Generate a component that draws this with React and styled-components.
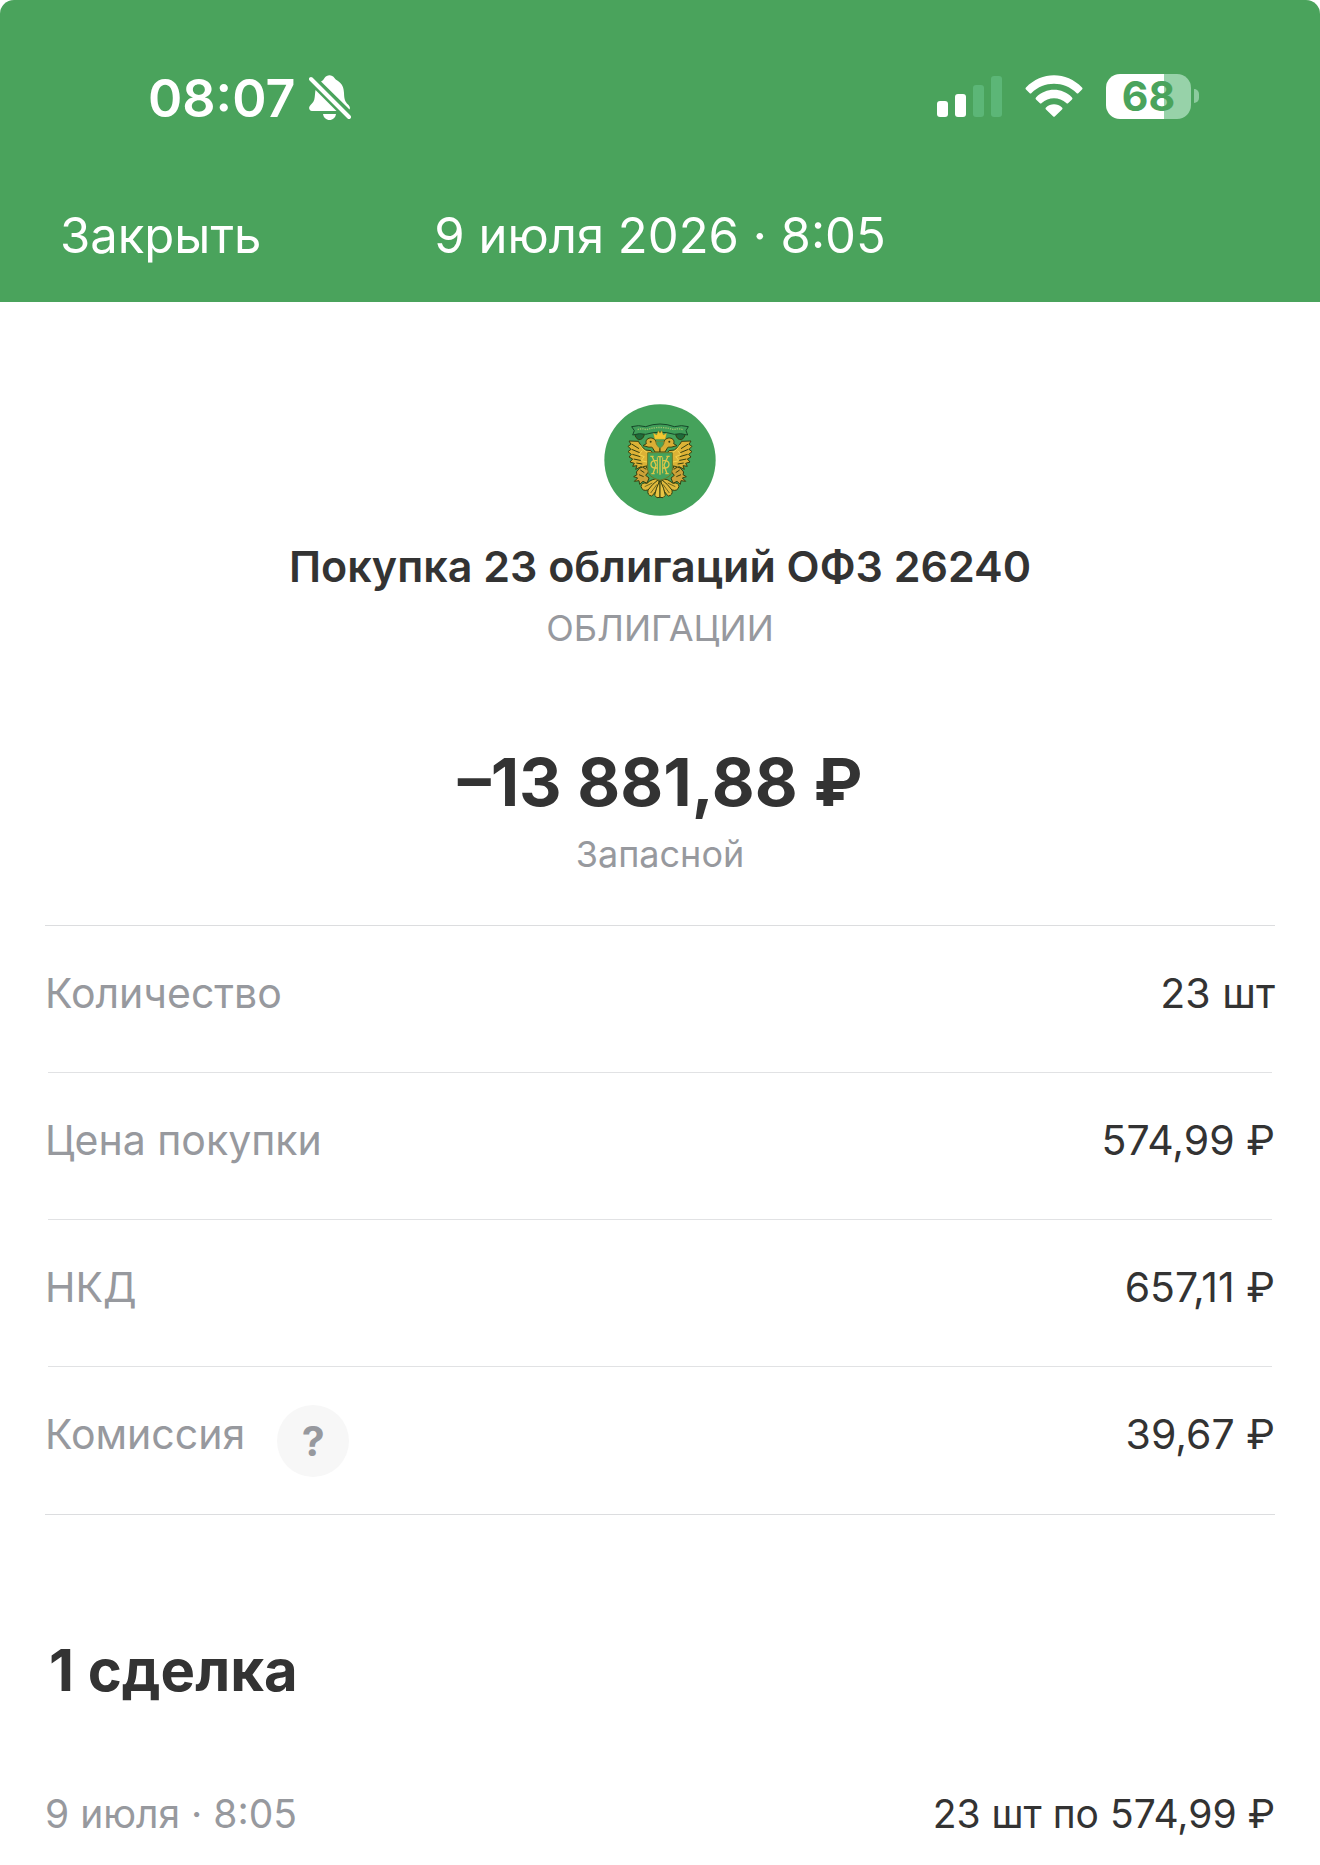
import React from "react";
import styled, { createGlobalStyle } from "styled-components";

const GlobalStyle = createGlobalStyle`
  * {
    box-sizing: border-box;
  }
  body {
    margin: 0;
    background-color: #fff;
    color: #333;
    font-family: "Inter", "Liberation Sans", sans-serif;
  }
  h1, h2, p, dl, dt, dd {
    margin: 0;
  }
`;

const Header = styled.header`
  padding: 64px 0 36px 0;
  border-radius: 14px 14px 0 0;
  background-color: #4aa35c;
  color: #fff;
`;

const StatusBar = styled.div`
  display: flex;
  justify-content: space-between;
  align-items: center;
  height: 68px;
  padding: 0 121px 0 148px;
`;

const ClockGroup = styled.div`
  display: flex;
  align-items: center;
  gap: 14px;
`;

const IconGroup = styled.div`
  display: flex;
  align-items: center;
  gap: 23px;
  padding-bottom: 4px;
`;

const Clock = styled.time`
  font-size: 52px;
  font-weight: 600;
`;

const Signal = styled.div`
  display: flex;
  align-items: flex-end;
  gap: 7px;
  height: 41px;
`;

const Bar = styled.span`
  width: 11px;
  height: ${props => props.size};
  border-radius: 3px;
  background-color: ${props => (props.$on ? "#fff" : "#5cb677")};
`;

const BatteryBox = styled.div`
  display: flex;
  align-items: center;
  gap: 3px;
`;

const BatteryBody = styled.div`
  width: 85px;
  height: 45px;
  border-radius: 14px;
  background: linear-gradient(to right, #fff 68%, #97d2a9 68%);
  color: #4aa35c;
  font-size: 41px;
  font-weight: 700;
  line-height: 45px;
  text-align: center;
`;

const BatteryTip = styled.span`
  width: 5px;
  height: 14px;
  border-radius: 0 7px 7px 0;
  background-color: #8ccb9e;
`;

const NavBar = styled.nav`
  display: grid;
  grid-template-columns: 1fr auto 1fr;
  margin-top: 74px;
  padding: 0 60px;
  font-size: 49px;
  line-height: 60px;
`;

const CloseBtn = styled.button`
  justify-self: start;
  padding: 0;
  border: 0;
  background: none;
  color: inherit;
  font: inherit;
  cursor: pointer;
`;

const Summary = styled.section`
  display: flex;
  flex-direction: column;
  align-items: center;
  padding: 102px 45px 47px;
  text-align: center;
`;

const Title = styled.h1`
  margin-top: 22px;
  font-size: 43px;
  font-weight: 600;
  line-height: 56px;
`;

const Caption = styled.p`
  margin-top: 10px;
  color: #97999e;
  font-size: 36px;
  line-height: 48px;
`;

const Amount = styled.p`
  margin-top: 92px;
  font-size: 66px;
  font-weight: 700;
  line-height: 76px;
`;

const Details = styled.dl`
  margin: 0 45px;
  border-top: 1px solid #dcdddf;
  border-bottom: 1px solid #dcdddf;
`;

const Row = styled.div`
  display: flex;
  justify-content: space-between;
  min-height: 147px;
  padding: 38px 0 37px;
  font-size: 41px;
  line-height: 58px;
  &:not(:last-child) {
    background: linear-gradient(#e1e2e4, #e1e2e4) center bottom / calc(100% - 6px) 1px no-repeat;
  }
`;

const Label = styled.dt`
  display: flex;
  gap: 32px;
  color: #97999e;
`;

const HintBtn = styled.button`
  width: 72px;
  height: 72px;
  padding: 0;
  border: 0;
  border-radius: 50%;
  background-color: #f7f7f7;
  color: #97999e;
  font: inherit;
  font-weight: 700;
  cursor: pointer;
`;

const Deals = styled.section`
  padding: 119px 45px 22px;
`;

const DealsTitle = styled.h2`
  padding: 0 4px;
  font-size: 58px;
  font-weight: 700;
  line-height: 72px;
`;

const Deal = styled.div`
  display: flex;
  justify-content: space-between;
  margin-top: 79px;
  font-size: 39px;
  line-height: 58px;
`;

const DealDate = styled.time`
  color: #97999e;
`;

const BellOff = () => (
  <svg width="42" height="46" viewBox="0 0 42 46" fill="#fff" aria-hidden="true">
    <path d="M12 6.500C14 5.500 14.500 4.500 15.500 3C18 -0.600 23 -0.600 25.500 3C26.500 4.500 27.500 5 29 6C33.500 9 34.800 13 35 18C35.200 24 36 26.500 39 29.500C40.500 31 41.500 32.500 40.500 34.500Z" />
    <path d="M6.500 15L27.500 36H3C0.500 36 -0.500 33.500 0.500 31.500C1.500 29.500 4.500 28 5.300 24.500C6 21.500 6 18 6.500 15Z" />
    <path d="M14 39H27C26.500 42.500 23.800 45 20.500 45C17.200 45 14.500 42.500 14 39Z" />
    <path d="M2 4L40 42" stroke="#fff" strokeWidth="4" strokeLinecap="round" />
  </svg>
);

const Wifi = () => (
  <svg width="58" height="42" viewBox="0 0 58 42" fill="#fff" aria-hidden="true">
    <path d="M1 12.500C16.500 -3.800 41.500 -3.800 57 12.500Q58 13.500 57 14.500L53.500 18Q52.500 19 51.500 18C39 5.800 19 5.800 6.500 18Q5.500 19 4.500 18L1 14.500Q0 13.500 1 12.500Z" />
    <path d="M11 22.500C21 12.300 37 12.300 47 22.500Q48 23.500 47 24.500L43.300 28Q42.300 29 41.300 28C34.500 21.700 23.500 21.700 16.700 28Q15.700 29 14.700 28L11 24.500Q10 23.500 11 22.500Z" />
    <path d="M21 32.500C25.500 28.300 32.500 28.300 37 32.500Q38 33.500 37 34.500L30 41.200Q29 42.200 28 41.200L21 34.500Q20 33.500 21 32.500Z" />
  </svg>
);

// left half of the eagle, mirrored for the right one
const EagleHalf = () => (
  <g stroke="#37400f" strokeWidth="3" strokeLinejoin="round">
    <path d="M134 112Q148 106 164 118Q160 134 146 133Q136 128 134 112Z" fill="#1f6b3a" />
    <path
      d="M211 170V156L200 146C201 138 194 127 182 128C171 129 167 137 170 145L160 151L172 154C180 158 188 152 190 160L196 170Z"
      fill="#d9ae35"
    />
    <circle cx="183" cy="139" r="3" fill="#37400f" stroke="none" />
    <path
      d="M176 174H190L184 166L168 164L156 154L146 138L118 137L124 147L115 153L124 162L115 169L125 177L118 185L129 191L121 200L134 204L129 213L142 211L138 222L154 214L164 220L176 206Z"
      fill="#dcb236"
    />
    <path d="M126 146L148 160M126 162L150 172M128 177L152 184M132 191L156 196M140 203L158 206" fill="none" />
    <path d="M150 148L162 164L174 172M158 166L148 178L164 184L154 196L172 200" fill="none" stroke="#f3d44e" />
    <path
      d="M168 212L150 218L140 230L142 238L132 244L144 248L134 258L148 256L150 267L160 258L172 264L178 248L168 240L178 228Z"
      fill="#cda238"
    />
    <path d="M152 224L164 232M148 238L162 244M160 216L170 222" fill="none" />
    <path d="M206 250Q186 250 172 264Q156 260 154 273Q158 289 174 284Q188 278 198 264Z" fill="#e0b93c" />
    <path d="M207 252Q188 266 175 284Q172 300 186 302Q200 292 208 262Z" fill="#e0b93c" />
    <path d="M211 254Q198 280 195 300Q201 311 211 306Z" fill="#e8c544" />
    <path d="M165 274L188 263M183 293L202 267" fill="none" strokeWidth="2" />
  </g>
);

const Emblem = () => (
  <svg width="112" height="112" viewBox="43 26 336 336" role="img" aria-label="ОФЗ">
    <circle cx="211" cy="194" r="167" fill="#45a25b" />
    <EagleHalf />
    <g transform="translate(422 0) scale(-1 1)">
      <EagleHalf />
    </g>
    <path
      d="M126 94Q146 88 168 94Q211 78 254 94Q276 88 296 94L289 106L294 119Q272 112 254 117Q211 104 168 117Q150 112 129 119L134 106Z"
      fill="#3f9d58"
      stroke="#17482a"
      strokeWidth="3"
    />
    <path
      d="M144 103Q156 98 170 103Q211 90 252 103Q266 98 280 103"
      fill="none"
      stroke="#9cc26b"
      strokeWidth="4"
      strokeDasharray="4 3"
    />
    <path
      d="M195 132L191 113L201 119L206 106L211 114L216 106L221 119L231 113L227 132Z"
      fill="#f2c832"
      stroke="#a57d1c"
      strokeWidth="1"
    />
    <path d="M199 138H223Q223 153 211 159Q199 153 199 138Z" fill="#45a25b" stroke="#8a8428" strokeWidth="2" />
    <path d="M174 172H248V222Q248 246 211 255Q174 246 174 222Z" fill="#45a25b" stroke="#6f7a26" strokeWidth="3" />
    <g fill="none" stroke="#dfc748" strokeWidth="4">
      <path d="M187 183L199 209L190 235M235 183L223 209L232 235M211 184V238M204 184H218M182 183H192M230 183H240M185 235H195M227 235H237" />
      <path d="M203 196H194Q184 198 184 207Q184 217 194 218H203M219 196H228Q238 198 238 207Q238 217 228 218H219" />
      <path d="M203 186V234M219 186V234" strokeWidth="3" />
    </g>
  </svg>
);

const details = [
  { label: "Количество", value: "23 шт" },
  { label: "Цена покупки", value: "574,99 ₽" },
  { label: "НКД", value: "657,11 ₽" },
  { label: "Комиссия", value: "39,67 ₽", hint: true }
];

const App = () => {
  return (
    <>
      <GlobalStyle />
      <Header>
        <StatusBar>
          <ClockGroup>
            <Clock>08:07</Clock>
            <BellOff />
          </ClockGroup>
          <IconGroup>
            <Signal>
              <Bar size="16px" $on />
              <Bar size="23px" $on />
              <Bar size="32px" />
              <Bar size="41px" />
            </Signal>
            <Wifi />
            <BatteryBox>
              <BatteryBody>68</BatteryBody>
              <BatteryTip />
            </BatteryBox>
          </IconGroup>
        </StatusBar>
        <NavBar>
          <CloseBtn type="button">Закрыть</CloseBtn>
          <time>9 июля 2026 · 8:05</time>
        </NavBar>
      </Header>
      <main>
        <Summary>
          <Emblem />
          <Title>Покупка 23 облигаций ОФЗ 26240</Title>
          <Caption>ОБЛИГАЦИИ</Caption>
          <Amount>–13 881,88 ₽</Amount>
          <Caption>Запасной</Caption>
        </Summary>
        <Details>
          {details.map(({ label, value, hint }) => (
            <Row key={label}>
              <Label>
                {label}
                {hint ? (
                  <HintBtn type="button" aria-label="Подробнее о комиссии">
                    ?
                  </HintBtn>
                ) : null}
              </Label>
              <dd>{value}</dd>
            </Row>
          ))}
        </Details>
        <Deals>
          <DealsTitle>1 сделка</DealsTitle>
          <Deal>
            <DealDate>9 июля · 8:05</DealDate>
            <span>23 шт по 574,99 ₽</span>
          </Deal>
        </Deals>
      </main>
    </>
  );
};

export default App;
